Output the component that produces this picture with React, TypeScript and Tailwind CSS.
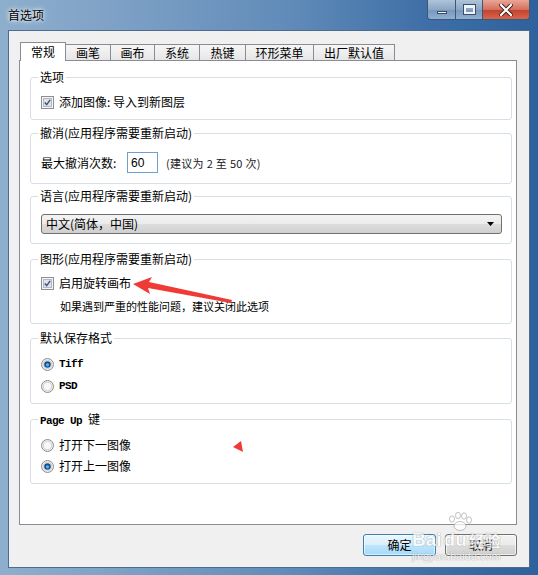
import React from 'react';

const tabs = [
  { label: '常规', w: 'w-[46px]' },
  { label: '画笔', w: 'w-[46px]' },
  { label: '画布', w: 'w-[45px]' },
  { label: '系统', w: 'w-[46px]' },
  { label: '热键', w: 'w-[47px]' },
  { label: '环形菜单', w: 'w-[69px]' },
  { label: '出厂默认值', w: 'w-[82px]' },
];

function CheckBox() {
  return (
    <svg width="13" height="13" viewBox="0 0 13 13" className="shrink-0">
      <rect x="0.5" y="0.5" width="12" height="12" fill="#f5f5f5" stroke="#8e8f8f" />
      <rect x="2.5" y="2.5" width="8" height="8" fill="#dfe3e8" stroke="#b3b9c2" />
      <path d="M3.8 6.5 L5.7 8.6 L9.2 3.9" fill="none" stroke="#3f5489" strokeWidth="1.5" />
    </svg>
  );
}

function Radio({ on }: { on?: boolean }) {
  return (
    <svg width="13" height="13" viewBox="0 0 13 13" className="shrink-0">
      <circle cx="6.5" cy="6.5" r="6" fill="#ececec" stroke="#8e8f8f" />
      <circle cx="6.5" cy="6.5" r="4.2" fill="#f8f8f8" stroke="#c9c9c9" strokeWidth="0.8" />
      {on && (
        <>
          <circle cx="6.5" cy="6.5" r="3.3" fill="#16508c" />
          <circle cx="6.5" cy="6.8" r="1.6" fill="#5fb4ef" />
        </>
      )}
    </svg>
  );
}

function Group({
  title,
  className,
  children,
}: {
  title: React.ReactNode;
  className: string;
  children: React.ReactNode;
}) {
  return (
    <div className={`relative border border-[#d5dfe5] rounded-[3px] pl-[10px] pr-[10px] ${className}`}>
      <span className="absolute left-[7px] -top-[8px] bg-white px-[2px] leading-[14px] whitespace-nowrap">
        {title}
      </span>
      {children}
    </div>
  );
}

export default function App() {
  return (
    <div className="relative w-[538px] h-[575px] overflow-hidden text-[12px] text-black font-['Noto_Sans_CJK_SC',sans-serif] bg-[linear-gradient(90deg,#8eaecd_0%,#7b9fc4_25%,#5f8ab8_55%,#3d6ea6_80%,#2f619c_100%)]">
      {/* Title bar */}
      <div className="flex h-[30px] items-start">
        <div className="pl-[8px] pt-[7px] leading-[16px] [text-shadow:0_0_6px_#ffffff,0_0_3px_#ffffff]">首选项</div>
        <div className="ml-auto mr-[8px] flex h-[20px] rounded-b-[4px] border border-t-0 border-[#3a5878] overflow-hidden">
          <div className="flex w-[28px] items-end justify-center pb-[5px] bg-[linear-gradient(#aec4da,#8ba7c5_50%,#7796b8_51%,#8fb0d3)] border-r border-[#3a5878]">
            <div className="h-[3px] w-[10px] bg-[#eef3f8] border border-[#3b4d63]" />
          </div>
          <div className="flex w-[27px] items-center justify-center bg-[linear-gradient(#aec4da,#8ba7c5_50%,#7796b8_51%,#8fb0d3)] border-r border-[#3a5878]">
            <div className="h-[9px] w-[11px] border-[2px] border-[#eef3f8] border-t-[3px] outline outline-1 outline-[#3b4d63]" />
          </div>
          <div className="flex w-[46px] items-center justify-center bg-[linear-gradient(#e8a696,#d4705d_50%,#c2412b_51%,#d8654d)]">
            <svg width="14" height="12" viewBox="0 0 14 12">
              <path d="M2 1 L12 11 M12 1 L2 11" stroke="#3a1d18" strokeWidth="4" strokeLinecap="square" />
              <path d="M2 1 L12 11 M12 1 L2 11" stroke="#ffffff" strokeWidth="2.2" strokeLinecap="square" />
            </svg>
          </div>
        </div>
      </div>

      {/* Client area */}
      <div className="mx-[8px] h-[538px] border border-[#4e6c8d] bg-[#f0f0f0] pl-[10px] pr-[12px] pt-[11px]">
        {/* Tabs */}
        <div className="relative z-10 -mb-px ml-px flex h-[19px] items-end">
          {tabs.map((t, i) =>
            i === 0 ? (
              <div
                key={t.label}
                className={`${t.w} flex h-[19px] items-center justify-center border border-b-0 border-[#898c95] bg-white leading-[14px]`}
              >
                {t.label}
              </div>
            ) : (
              <div
                key={t.label}
                className={`${t.w} -ml-px flex h-[17px] items-center justify-center border border-[#898c95] bg-[linear-gradient(#f6f6f6,#e6e6e6)] leading-[14px]`}
              >
                {t.label}
              </div>
            )
          )}
        </div>

        {/* Panel */}
        <div className="h-[465px] border border-[#898c95] bg-white pl-[10px] pr-[4px]">
          <Group title="选项" className="mt-[16px] h-[43px]">
            <div className="mt-[17px] flex h-[14px] items-center gap-[5px] leading-[14px]">
              <CheckBox />
              <span>添加图像: 导入到新图层</span>
            </div>
          </Group>

          <Group title="撤消(应用程序需要重新启动)" className="mt-[13px] h-[51px]">
            <div className="mt-[18px] flex h-[21px] items-center leading-[14px]">
              <span className="w-[86px]">最大撤消次数:</span>
              <div className="flex h-[21px] w-[31px] items-center border border-[#6f9fcf] pl-[3px] font-['Liberation_Sans',sans-serif] text-[12px]">
                60
              </div>
              <span className="ml-[8px] text-[11px] tracking-[0.3px] text-[#1a1a1a] whitespace-pre">(建议为 2 至 50 次)</span>
            </div>
          </Group>

          <Group title="语言(应用程序需要重新启动)" className="mt-[12px] h-[48px]">
            <div className="mt-[17px] flex h-[20px] w-[461px] items-center rounded-[3px] border border-[#707070] bg-[linear-gradient(#f3f3f3_0%,#ebebeb_50%,#dddddd_50%,#d0d0d0_100%)] pl-[4px] pr-[7px] leading-[14px]">
              <span>中文(简体，中国)</span>
              <svg width="7" height="4" viewBox="0 0 7 4" className="ml-auto">
                <path d="M0 0 H7 L3.5 4 Z" fill="#000000" />
              </svg>
            </div>
          </Group>

          <Group title="图形(应用程序需要重新启动)" className="mt-[15px] h-[65px]">
            <div className="mt-[16px] flex h-[14px] items-center gap-[5px] leading-[14px]">
              <CheckBox />
              <span>启用旋转画布</span>
            </div>
            <div className="mt-[9px] pl-[19px] text-[11px] leading-[14px]">如果遇到严重的性能问题，建议关闭此选项</div>
          </Group>

          <Group title="默认保存格式" className="mt-[14px] h-[66px]">
            <div className="mt-[18px] flex h-[14px] items-center gap-[5px] leading-[14px]">
              <Radio on />
              <span className="font-['Liberation_Mono',monospace] text-[11px] font-bold tracking-[-0.6px]">Tiff</span>
            </div>
            <div className="mt-[8px] flex h-[14px] items-center gap-[5px] leading-[14px]">
              <Radio />
              <span className="font-['Liberation_Mono',monospace] text-[11px] font-bold tracking-[-0.6px]">PSD</span>
            </div>
          </Group>

          <Group
            title={
              <>
                <span className="font-['Liberation_Mono',monospace] text-[11px] font-bold tracking-[-0.6px] whitespace-pre">Page Up </span>
                <span>键</span>
              </>
            }
            className="mt-[15px] h-[65px]"
          >
            <div className="mt-[18px] flex h-[14px] items-center gap-[5px] leading-[14px]">
              <Radio />
              <span>打开下一图像</span>
            </div>
            <div className="mt-[7px] flex h-[14px] items-center gap-[5px] leading-[14px]">
              <Radio on />
              <span>打开上一图像</span>
            </div>
          </Group>
        </div>

        {/* Buttons */}
        <div className="mt-[9px] flex justify-end gap-[9px]">
          <button className="flex h-[22px] w-[73px] items-center justify-center rounded-[3px] border border-[#3c7fb1] bg-[linear-gradient(#eaf6fd_0%,#d9f0fc_50%,#bee6fd_50%,#a7d9f5_100%)] leading-[14px] shadow-[inset_0_0_0_1px_#ffffff99]">
            确定
          </button>
          <button className="flex h-[22px] w-[72px] items-center justify-center rounded-[3px] border border-[#707070] bg-[linear-gradient(#f2f2f2_0%,#ebebeb_50%,#dddddd_50%,#cfcfcf_100%)] leading-[14px] shadow-[inset_0_0_0_1px_#ffffffaa]">
            取消
          </button>
        </div>
      </div>

      {/* Red annotation arrow */}
      <svg className="pointer-events-none absolute left-0 top-0" width="538" height="575" viewBox="0 0 538 575">
        <polygon
          points="133,284 152,277 149,282 232,300 231,303 148,288 150,294"
          fill="#f03a35"
        />
        <polygon points="233,447 241,441 243,452" fill="#f03a35" />
        {/* watermark paw */}
        <g fill="#ffffff" stroke="#9a9a9a" strokeWidth="0.8" opacity="0.75">
          <ellipse cx="452" cy="519" rx="2.5" ry="3.2" />
          <ellipse cx="458" cy="515.5" rx="2.5" ry="3.2" />
          <ellipse cx="464" cy="516" rx="2.5" ry="3.2" />
          <ellipse cx="469" cy="520" rx="2.5" ry="3.2" />
          <ellipse cx="460" cy="526" rx="6" ry="4.5" />
        </g>
      </svg>

      {/* Watermark */}
      <div className="pointer-events-none absolute left-[412px] top-[530px] flex flex-col opacity-70">
        <div className="flex items-end gap-[2px] font-['Liberation_Sans',sans-serif] text-[19px] font-bold leading-[20px] text-white [text-shadow:0_0_1px_#8a8a8a,0_0_1px_#8a8a8a]">
          <span>Bai</span>
          <span>du</span>
          <span className="text-[16px] font-['Noto_Sans_CJK_SC',sans-serif]">经验</span>
        </div>
        <div className="font-['Liberation_Sans',sans-serif] text-[11px] leading-[12px] text-white [text-shadow:0_0_1px_#8a8a8a,0_0_1px_#8a8a8a]">
          jingyan.baidu.com
        </div>
      </div>
    </div>
  );
}
